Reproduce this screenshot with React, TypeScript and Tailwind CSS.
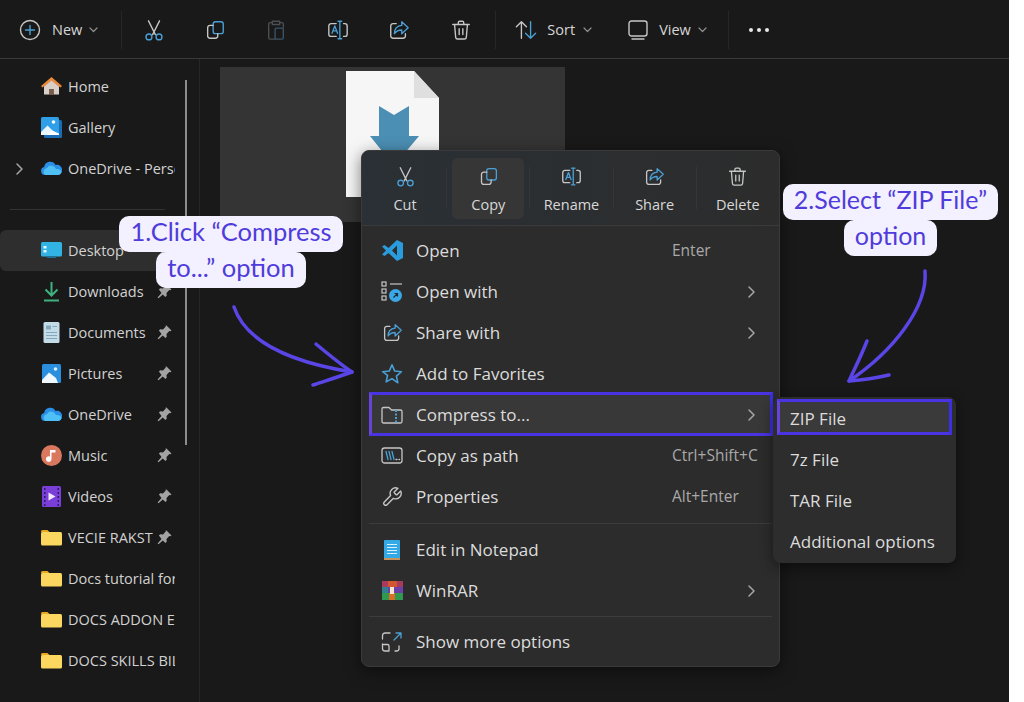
import type { ReactNode } from "react";

const G = "#c6c6c6";
const B = "#4a9fd4";

function Ico({ size = 22, children }: { size?: number; children: ReactNode }) {
  return (
    <svg width={size} height={size} viewBox="0 0 24 24" fill="none" strokeWidth="1.5" strokeLinecap="round" strokeLinejoin="round" className="shrink-0">
      {children}
    </svg>
  );
}

const CutIcon = ({ size }: { size?: number }) => (
  <Ico size={size}>
    <path d="M6 2l7.5 15M18 2l-7.5 15" stroke={G} />
    <circle cx="6.5" cy="19.5" r="3.2" stroke={B} />
    <circle cx="17.5" cy="19.5" r="3.2" stroke={B} />
  </Ico>
);
const CopyIcon = ({ size }: { size?: number }) => (
  <Ico size={size}>
    <rect x="10" y="3" width="11" height="13" rx="2.5" stroke={B} />
    <path d="M10 7H6.5A2.5 2.5 0 0 0 4 9.5v9A2.5 2.5 0 0 0 6.500 21h6a2.500 2.500 0 0 0 2.500-2.500V16" stroke={G} />
  </Ico>
);
const PasteIcon = ({ size }: { size?: number }) => (
  <Ico size={size}>
    <path d="M8 4H5.500A1.500 1.500 0 0 0 4 5.500v15A1.500 1.500 0 0 0 5.500 22H11M16 4h2.500A1.500 1.500 0 0 1 20 5.500V9M8 2.500h8V6H8z" stroke="#4b4f52" />
    <rect x="11" y="10" width="9" height="12" rx="1.500" stroke="#3a5468" />
  </Ico>
);
const RenameIcon = ({ size }: { size?: number }) => (
  <Ico size={size}>
    <path d="M10 5H4.500A2.500 2.500 0 0 0 2 7.500v9A2.500 2.500 0 0 0 4.500 19H10M18 5h1.500A2.500 2.500 0 0 1 22 7.500v9a2.500 2.500 0 0 1-2.500 2.500H18" stroke={G} />
    <path d="M5.500 15.500l3-8 3 8M6.800 13h3.400M14 2.500v19M12 2.500h4M12 21.500h4" stroke={B} />
  </Ico>
);
const ShareIcon = ({ size }: { size?: number }) => (
  <Ico size={size}>
    <path d="M9 5H5.500A2.500 2.500 0 0 0 3 7.500v11A2.500 2.500 0 0 0 5.500 21h11a2.500 2.500 0 0 0 2.500-2.500V16" stroke={G} />
    <path d="M15 3l7 6.500-7 6.500v-4c-4 0-6 1-8 4 0-5 3-8.500 8-9z" stroke={B} />
  </Ico>
);
const TrashIcon = ({ size }: { size?: number }) => (
  <Ico size={size}>
    <path d="M3 6h18M9 6V4a1.500 1.500 0 0 1 1.500-1.500h3A1.500 1.500 0 0 1 15 4v2M5 6l1.200 14a2 2 0 0 0 2 1.800h7.600a2 2 0 0 0 2-1.800L19 6M10 10.500v6.500M14 10.500v6.500" stroke={G} />
  </Ico>
);
const Chevron = ({ className }: { className: string }) => (
  <svg width="14" height="14" viewBox="0 0 14 14" fill="none" stroke="#a5a5a5" strokeWidth="1.500" strokeLinecap="round" strokeLinejoin="round" className={className}>
    <path d="M5 2l5 5-5 5" />
  </svg>
);
const Caret = () => (
  <svg width="9" height="6" viewBox="0 0 9 6" fill="none" stroke="#8f8f8f" strokeWidth="1.200" strokeLinecap="round" strokeLinejoin="round">
    <path d="M1 1l3.500 3.500L8 1" />
  </svg>
);

/* sidebar icons */
const Folder = () => (
  <svg width="21" height="21" viewBox="0 0 21 21" className="shrink-0">
    <path d="M0 4.500A1.500 1.500 0 0 1 1.500 3h5l2.500 2.500H0z" fill="#e8a91f" />
    <rect x="0" y="5" width="21" height="13.500" rx="1.500" fill="#fbd75f" />
  </svg>
);
const Cloud = () => (
  <svg width="21" height="21" viewBox="0 0 21 21" className="shrink-0">
    <path d="M4 17a4 4 0 0 1-.8-7.900A6 6 0 0 1 14.500 7a5 5 0 0 1 6.500 5.500A4.500 4.500 0 0 1 16.500 17z" fill="#2a8fe8" />
    <path d="M4 17a4 4 0 0 1 2-7 5 5 0 0 1 9 1c3-.5 5.500 1 5.500 3A4 4 0 0 1 16.500 17z" fill="#4fc0f5" />
  </svg>
);
const Home = () => (
  <svg width="21" height="21" viewBox="0 0 21 21" className="shrink-0">
    <path d="M3 9v9.500h5.500V13h4v5.500H18V9l-7.500-6z" fill="#d8cfc8" />
    <path d="M0 10L10.500 1 21 10l-1.500 1.500-9-7.500-9 7.500z" fill="#ec8a38" />
    <path d="M10.500 4l8 6.500V11l-8-6.500-8 6.500v-.5z" fill="#d9622a" />
    <rect x="8.500" y="13" width="4" height="6" fill="#7a5a48" />
  </svg>
);
const Gallery = () => (
  <svg width="21" height="21" viewBox="0 0 21 21" className="shrink-0">
    <rect x="3" y="3" width="18" height="18" rx="1.500" fill="#1c6cb5" />
    <rect x="0" y="0" width="18" height="18" rx="1.500" fill="#2f9fe8" />
    <circle cx="12.500" cy="5" r="1.800" fill="#ffffff" />
    <path d="M0 15l6.500-6.500L13 15v3H0z" fill="#eaf5fd" />
    <path d="M6 18l5-4.500 7 3V18z" fill="#ffffff" />
  </svg>
);
const Desktop = () => (
  <svg width="21" height="21" viewBox="0 0 21 21" className="shrink-0">
    <rect x="0" y="2" width="21" height="14.500" rx="1.500" fill="#31b4e4" />
    <rect x="2.500" y="6" width="3" height="2.500" fill="#e9f8fd" />
    <rect x="2.500" y="10" width="3" height="2.500" fill="#e9f8fd" />
    <rect x="6" y="16.500" width="9" height="1.500" fill="#1b6f96" />
  </svg>
);
const Downloads = () => (
  <svg width="21" height="21" viewBox="0 0 21 21" fill="none" stroke="#3fb27f" strokeWidth="2" className="shrink-0">
    <path d="M10.500 1v12.500M4.500 8.500l6 6 6-6M3 19.500h15" />
  </svg>
);
const Documents = () => (
  <svg width="21" height="21" viewBox="0 0 21 21" className="shrink-0">
    <rect x="2.500" y="0" width="16" height="21" rx="1.500" fill="#c4dbe8" />
    <rect x="5" y="3.500" width="5" height="4" fill="#84a9bf" />
    <path d="M5 10h11v1H5zM5 13h11v1H5zM5 16h11v1H5zM11.500 4H16v1h-4.500z" fill="#84a9bf" />
  </svg>
);
const Pictures = () => (
  <svg width="21" height="21" viewBox="0 0 21 21" className="shrink-0">
    <rect x="1" y="1" width="19" height="19" rx="1.500" fill="#2a8fde" />
    <circle cx="14.500" cy="6" r="1.800" fill="#d8efff" />
    <path d="M1 17l7-7.500L15 15l2 5H1z" fill="#f1f8fd" />
  </svg>
);
const Music = () => (
  <svg width="21" height="21" viewBox="0 0 21 21" className="shrink-0">
    <circle cx="10.500" cy="10.500" r="10.500" fill="#d9785f" />
    <path d="M9 5h5.500v2.500H10.500V14a2.800 2.800 0 1 1-1.500-2.400z" fill="#ffffff" />
  </svg>
);
const Videos = () => (
  <svg width="21" height="21" viewBox="0 0 21 21" className="shrink-0">
    <rect x="1" y="0" width="19" height="21" rx="1.500" fill="#7a3fd8" />
    <path d="M3 2h1.500v2H3zM3 6h1.500v2H3zM3 10h1.500v2H3zM3 14h1.500v2H3zM3 18h1.500v2H3zM16.500 2H18v2h-1.500zM16.500 6H18v2h-1.500zM16.500 10H18v2h-1.500zM16.500 14H18v2h-1.500zM16.500 18H18v2h-1.500z" fill="#2f1a66" />
    <path d="M7.500 6.500l7 4-7 4z" fill="#f1e8ff" />
  </svg>
);
const Pin = () => (
  <svg width="15" height="15" viewBox="0 0 15 15" className="ml-[3px] mr-[3px] shrink-0">
    <path d="M9.500 0.500l5 5-1.200.8-1-.2-2.800 2.800.2 2.800-1.300 1.300-2.600-2.600-4.300 3.900-.9-.9 3.900-4.300L1.900 5.500l1.300-1.300 2.800.2 2.800-2.800-.2-1z" fill="#a3a3a3" />
  </svg>
);

type NavItem = { icon: ReactNode; label: string; expand?: boolean; active?: boolean; pin?: boolean };

const navTop: NavItem[] = [
  { icon: <Home />, label: "Home" },
  { icon: <Gallery />, label: "Gallery" },
  { icon: <Cloud />, label: "OneDrive - Personal", expand: true },
];
const navPinned: NavItem[] = [
  { icon: <Desktop />, label: "Desktop", active: true, pin: true },
  { icon: <Downloads />, label: "Downloads", pin: true },
  { icon: <Documents />, label: "Documents", pin: true },
  { icon: <Pictures />, label: "Pictures", pin: true },
  { icon: <Cloud />, label: "OneDrive", pin: true },
  { icon: <Music />, label: "Music", pin: true },
  { icon: <Videos />, label: "Videos", pin: true },
  { icon: <Folder />, label: "VECIE RAKST", pin: true },
  { icon: <Folder />, label: "Docs tutorial for" },
  { icon: <Folder />, label: "DOCS ADDON E" },
  { icon: <Folder />, label: "DOCS SKILLS BIL" },
];

function NavRow({ item }: { item: NavItem }) {
  return (
    <div className={`flex h-[41px] items-center ${item.active ? "rounded-md bg-[#2e2e2e]" : ""}`}>
      <div className="flex w-[41px] shrink-0 pl-[12px]">{item.expand && <Chevron className="" />}</div>
      {item.icon}
      <span className="ml-[6px] min-w-0 flex-1 overflow-hidden whitespace-nowrap text-[14.500px] text-[#d2d2d2]">{item.label}</span>
      {item.pin && <Pin />}
    </div>
  );
}

function ToolIcon({ children }: { children: ReactNode }) {
  return <div className="flex w-[61.400px] justify-center">{children}</div>;
}

function Toolbar() {
  return (
    <div className="flex h-[59px] shrink-0 items-center border-b border-[#3a3a3a] pt-[1px] text-[14.500px] font-medium text-[#d6d6d6]">
      <div className="flex w-[121px] items-center pl-[19px]">
        <svg width="22" height="22" viewBox="0 0 22 22" fill="none" strokeWidth="1.400" strokeLinecap="round">
          <circle cx="11" cy="11" r="9.500" stroke={G} />
          <path d="M11 6.500v9M6.500 11h9" stroke={B} />
        </svg>
        <span className="ml-[11px] mr-[7px]">New</span>
        <Caret />
      </div>
      <div className="h-[38px] w-px bg-[#262626]" />
      <div className="flex pl-[1px]">
        <ToolIcon><CutIcon /></ToolIcon>
        <ToolIcon><CopyIcon /></ToolIcon>
        <ToolIcon><PasteIcon /></ToolIcon>
        <ToolIcon><RenameIcon /></ToolIcon>
        <ToolIcon><ShareIcon /></ToolIcon>
        <ToolIcon><TrashIcon /></ToolIcon>
      </div>
      <div className="ml-[4px] h-[38px] w-px bg-[#262626]" />
      <div className="flex items-center pl-[19px]">
        <svg width="22" height="22" viewBox="0 0 24 24" fill="none" strokeWidth="1.500" strokeLinecap="round" strokeLinejoin="round">
          <path d="M7 21V3M1.500 8.500L7 3l5.500 5.500" stroke={G} />
          <path d="M17 3v18M11.500 15.500L17 21l5.500-5.500" stroke={B} />
        </svg>
        <span className="ml-[10px] mr-[8px]">Sort</span>
        <Caret />
      </div>
      <div className="flex items-center pl-[36px]">
        <svg width="20" height="20" viewBox="0 0 20 20" fill="none" stroke={G} strokeWidth="1.400" strokeLinecap="round">
          <rect x="1" y="1" width="18" height="15" rx="2.500" />
          <path d="M4 19h12" />
        </svg>
        <span className="ml-[11px] mr-[7px]">View</span>
        <Caret />
      </div>
      <div className="ml-[21px] h-[38px] w-px bg-[#262626]" />
      <div className="ml-[20px] flex gap-[4px]">
        <span className="size-[4px] rounded-full bg-[#e8e8e8]" />
        <span className="size-[4px] rounded-full bg-[#e8e8e8]" />
        <span className="size-[4px] rounded-full bg-[#e8e8e8]" />
      </div>
    </div>
  );
}

function Sidebar() {
  return (
    <div className="flex w-[200px] shrink-0 border-r border-[#262626]">
      <div className="w-[175px] shrink-0 pt-[7px]">
        {navTop.map((n) => <NavRow key={n.label} item={n} />)}
        <div className="flex h-[41px] items-center pl-[10px] pr-[10px]">
          <div className="h-px w-full bg-[#333333]" />
        </div>
        {navPinned.map((n) => <NavRow key={n.label} item={n} />)}
      </div>
      <div className="ml-[10px] mt-[21px] h-[365px] w-[2px] bg-[#8c8c8c]" />
    </div>
  );
}

function FileTile() {
  return (
    <div className="ml-[20px] mt-[8px] flex h-[155px] w-[345px] justify-center bg-[#343434] pt-[4px]">
      <svg width="93" height="126" viewBox="0 0 93 126">
        <path d="M0 0H68L93 27V126H0Z" fill="#f6f6f6" />
        <path d="M68 0L93 27H68Z" fill="#dfdfdf" />
        <path d="M33 35L48 44L63 35V65H73L48 95L24 65H33Z" fill="#4b8fb4" />
      </svg>
    </div>
  );
}

function TopAction({ icon, label, active }: { icon: ReactNode; label: string; active?: boolean }) {
  return (
    <div className="relative flex w-[83px] items-center justify-center">
      <div className={`flex h-[61px] w-[72px] flex-col items-center justify-between rounded-md pb-[3px] pt-[8px] ${active ? "bg-[#363636]" : ""}`}>
        {icon}
        <span className="text-[14.500px] font-medium text-[#d8d8d8]">{label}</span>
      </div>
    </div>
  );
}

function MenuRow({ icon, label, hint, more, hot }: { icon: ReactNode; label: string; hint?: string; more?: boolean; hot?: boolean }) {
  return (
    <div className="relative flex h-[41px] items-center pl-[19px] pr-[20px]">
      {hot && <div className="absolute -top-[2px] bottom-[-1px] left-[7px] right-[6px] border-[3.500px] border-b-[#4a33e2] border-l-[#6444dc] border-r-[#3a2fe6] border-t-[#4a33e2] bg-[#383838]" />}
      <div className="relative flex w-[22px] shrink-0 justify-center">{icon}</div>
      <span className="relative ml-[13px] flex-1 text-[17px] text-[#dcdcdc]">{label}</span>
      <div className="relative flex w-[87px] shrink-0 items-center">
        {hint && <span className="whitespace-nowrap text-[15.500px] text-[#a9a9a9]">{hint}</span>}
        {more && <Chevron className="ml-auto mr-[1px]" />}
      </div>
    </div>
  );
}

function ContextMenu() {
  return (
    <div className="absolute left-[361px] top-[150px] h-[517px] w-[419px] rounded-lg border border-[#3a3a3a] bg-[#2c2c2c] shadow-[0_4px_16px_rgba(0,0,0,0.5)]">
      <div className="flex h-[75px] items-center rounded-t-lg border-b border-[#3a3a3a] bg-gradient-to-r from-[#2a3035] to-[#2c2c2c] pl-[2px]">
        <TopAction icon={<CutIcon size={21} />} label="Cut" />
        <div className="h-[42px] w-px bg-[#363636]" />
        <TopAction icon={<CopyIcon size={21} />} label="Copy" active />
        <div className="h-[42px] w-px bg-[#363636]" />
        <TopAction icon={<RenameIcon size={21} />} label="Rename" />
        <div className="h-[42px] w-px bg-[#363636]" />
        <TopAction icon={<ShareIcon size={21} />} label="Share" />
        <div className="h-[42px] w-px bg-[#363636]" />
        <TopAction icon={<TrashIcon size={21} />} label="Delete" />
      </div>
      <div className="pt-[4px]">
        <MenuRow
          label="Open"
          hint="Enter"
          icon={
            <svg width="21" height="21" viewBox="0 0 21 21">
              <path d="M15 0l6 3v15l-6 3-8.500-8-4 3L0 14.500 4 10.500 0 6.500 2.500 5l4 3z" fill="#2a9bdc" />
              <path d="M15 5.500l-5 5 5 5z" fill="#2c2c2c" />
            </svg>
          }
        />
        <MenuRow
          label="Open with"
          more
          icon={
            <svg width="22" height="22" viewBox="0 0 22 22" fill="none" stroke={G} strokeWidth="1.200">
              <rect x="1" y="1" width="4" height="4" />
              <rect x="1" y="8" width="4" height="4" />
              <rect x="1" y="15" width="4" height="4" />
              <path d="M9 3h12" />
              <circle cx="14.500" cy="14.500" r="6.500" fill="#3aa7e6" stroke="none" />
              <path d="M12.500 16.500l4-4M13.500 12.500h3v3" stroke="#1f2a33" />
            </svg>
          }
        />
        <MenuRow label="Share with" more icon={<ShareIcon size={21} />} />
        <MenuRow
          label="Add to Favorites"
          icon={
            <svg width="22" height="22" viewBox="0 0 24 24" fill="none" stroke={B} strokeWidth="1.700" strokeLinejoin="round">
              <path d="M12 2l3 6.800 7.300.7-5.500 4.900 1.600 7.200L12 17l-6.400 3.600 1.600-7.200L1.700 9.500 9 8.800z" />
            </svg>
          }
        />
        <MenuRow
          label="Compress to..."
          more
          hot
          icon={
            <svg width="22" height="22" viewBox="0 0 22 22" fill="none" strokeWidth="1.300" strokeLinejoin="round">
              <path d="M1 5a1.500 1.500 0 0 1 1.500-1.500H8l2.500 2.500h9A1.500 1.500 0 0 1 21 7.500v10a1.500 1.500 0 0 1-1.500 1.500h-17A1.500 1.500 0 0 1 1 17.500z" stroke={G} />
              <path d="M15 6v13" stroke={B} strokeWidth="2" strokeDasharray="2 1.500" />
            </svg>
          }
        />
        <MenuRow
          label="Copy as path"
          hint="Ctrl+Shift+C"
          icon={
            <svg width="22" height="22" viewBox="0 0 22 22" fill="none" strokeWidth="1.300" strokeLinecap="round">
              <rect x="1" y="3" width="20" height="15" rx="2.500" stroke={G} />
              <path d="M5 6.500l2 8M8 6.500l2 8M11 6.500l2 8" stroke={B} />
              <path d="M15 14.500h1M18 14.500h.5" stroke={G} />
            </svg>
          }
        />
        <MenuRow
          label="Properties"
          hint="Alt+Enter"
          icon={
            <svg width="22" height="22" viewBox="0 0 24 24" fill="none" stroke={G} strokeWidth="1.500" strokeLinejoin="round">
              <path d="M14.700 6.300a1 1 0 0 0 0 1.400l1.600 1.600a1 1 0 0 0 1.400 0l3.770-3.770a6 6 0 0 1-7.940 7.940l-6.910 6.910a2.120 2.120 0 0 1-3-3l6.910-6.910a6 6 0 0 1 7.940-7.940z" />
            </svg>
          }
        />
        <div className="flex h-[12px] items-center px-[7px]"><div className="h-px w-full bg-[#3c3c3c]" /></div>
        <MenuRow
          label="Edit in Notepad"
          icon={
            <svg width="22" height="22" viewBox="0 0 22 22">
              <rect x="3" y="1" width="16" height="20" rx="1" fill="#35a8e6" />
              <rect x="3" y="19" width="16" height="2" fill="#c9925a" />
              <path d="M6 5h10v1H6zM6 8h10v1H6zM6 11h10v1H6zM6 14h10v1H6z" fill="#d8f0fc" />
            </svg>
          }
        />
        <MenuRow
          label="WinRAR"
          more
          icon={
            <svg width="21" height="21" viewBox="0 0 21 21">
              <rect x="0" y="1" width="21" height="6" fill="#a8395f" />
              <rect x="6" y="1" width="9" height="6" fill="#d2562f" />
              <rect x="0" y="7" width="21" height="6" fill="#6c3fa8" />
              <rect x="0" y="7" width="6" height="6" fill="#2f7f8f" />
              <rect x="0" y="13" width="21" height="7" fill="#2f9a4f" />
              <rect x="7" y="13" width="6" height="7" fill="#d9702a" />
              <rect x="8" y="7" width="4" height="7" fill="#f2e6cf" />
            </svg>
          }
        />
        <div className="flex h-[10px] items-center px-[7px]"><div className="h-px w-full bg-[#3c3c3c]" /></div>
        <MenuRow
          label="Show more options"
          icon={
            <svg width="22" height="22" viewBox="0 0 22 22" fill="none" strokeWidth="1.300" strokeLinecap="round" strokeLinejoin="round">
              <path d="M9 2H4a2.500 2.500 0 0 0-2.500 2.500V8M1.500 13v4.500A2.500 2.500 0 0 0 4 20h4M8 20v-5a1.500 1.500 0 0 0-1.500-1.500h-5M14 20h1.500a2.500 2.500 0 0 0 2.500-2.500V15" stroke={G} />
              <path d="M13 9l7-7M15 2h5v5" stroke={B} />
            </svg>
          }
        />
      </div>
    </div>
  );
}

function SubMenu() {
  const items = ["ZIP File", "7z File", "TAR File", "Additional options"];
  return (
    <div className="absolute left-[773px] top-[397px] h-[166px] w-[183px] rounded-lg bg-[#2d2d2d] pt-[1px] shadow-[0_4px_14px_rgba(0,0,0,0.45)]">
      {items.map((t, i) => (
        <div key={t} className="relative flex h-[41px] items-center pl-[17px]">
          {i === 0 && <div className="absolute bottom-[4px] left-[4px] right-[4px] top-[1px] border-[3px] border-b-[#4a33e2] border-l-[#6444dc] border-r-[#3a2fe6] border-t-[#4a33e2] bg-[#3a3a3a]" />}
          <span className="relative whitespace-nowrap text-[17px] text-[#dcdcdc]">{t}</span>
        </div>
      ))}
    </div>
  );
}

function Callout({ lines, className }: { lines: [string, string]; className: string }) {
  return (
    <div className={`absolute flex flex-col items-center leading-[30px] text-[#4f3cdb] [font-family:Lato,sans-serif] ${className}`}>
      <div className="h-[36px] whitespace-nowrap rounded-[10px] bg-[#f3f0ff] px-[11px]">{lines[0]}</div>
      <div className="h-[36px] whitespace-nowrap rounded-[10px] bg-[#f3f0ff] px-[11px]">{lines[1]}</div>
    </div>
  );
}

export default function App() {
  return (
    <div className="relative flex h-[702px] w-[1024px] overflow-hidden bg-white [font-family:'Open_Sans',sans-serif]">
      <div className="flex h-full w-[1009px] flex-col bg-[#191919]">
        <Toolbar />
        <div className="flex min-h-0 flex-1">
          <Sidebar />
          <div className="flex-1"><FileTile /></div>
        </div>
      </div>
      <ContextMenu />
      <SubMenu />
      <Callout lines={["1.Click “Compress", "to...” option"]} className="left-[120px] top-[216px] w-[222px] text-[25.500px]" />
      <Callout lines={["2.Select “ZIP File”", "option"]} className="left-[783px] top-[184px] w-[215px] text-[25px]" />
      {/* hand drawn arrows */}
      <svg className="pointer-events-none absolute left-0 top-0" width="1024" height="702" fill="none" stroke="#5a45e6" strokeWidth="3.500" strokeLinecap="round" strokeLinejoin="round">
        <path d="M234 307C246 342 290 362 352 372" />
        <path d="M316 344C328 354 340 364 352 372C338 377 325 381 313 385" />
        <path d="M925 271C928 308 892 352 849 381" />
        <path d="M867 341C862 354 855 368 849 381C862 380 876 378 889 375" />
      </svg>
    </div>
  );
}
